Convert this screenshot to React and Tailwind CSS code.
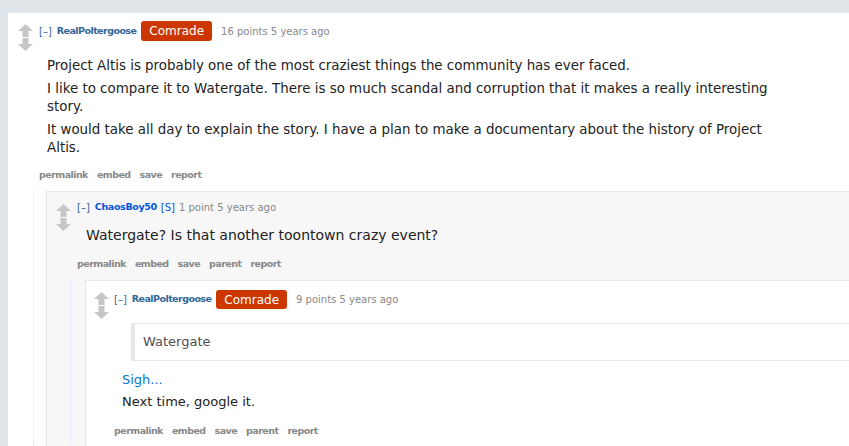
import React from "react";

function Arrows() {
  return (
    <div className="flex flex-col items-center w-[15px] shrink-0 gap-[1px]">
      <svg width="15" height="13" viewBox="0 0 15 13">
        <polygon points="7.5,0 15,7 10.5,7 10.5,13 4.5,13 4.5,7 0,7" fill="#c6c6c6" />
      </svg>
      <svg width="15" height="13" viewBox="0 0 15 13">
        <polygon points="4.5,0 10.5,0 10.5,6 15,6 7.5,13 0,6 4.5,6" fill="#c6c6c6" />
      </svg>
    </div>
  );
}

function Badge({ h }) {
  return (
    <span
      className={
        "inline-flex items-center px-[8px] rounded-[3px] bg-[#cc3700] text-white text-[12px] leading-none ml-[5px] mr-[9px] " +
        (h === 19 ? "h-[19px]" : "h-[20px]")
      }
    >
      Comrade
    </span>
  );
}

function Actions({ items }) {
  return (
    <div className="flex gap-[9px] text-[9.5px] font-bold text-[#888] leading-[14px] tracking-[-0.55px]">
      {items.map((t) => (
        <span key={t}>{t}</span>
      ))}
    </div>
  );
}

export default function App() {
  return (
    <div
      className="w-[849px] h-[446px] overflow-hidden bg-[#dfe5e8] border-t-2 border-[#e4e6e7] pt-[11px] pl-[8px]"
      style={{ fontFamily: '"DejaVu Sans", Verdana, sans-serif' }}
    >
      <div className="bg-white h-full pt-[8px]">
        {/* Top-level comment */}
        <div className="flex pl-[10px]">
          <div className="pt-[3px]">
            <Arrows />
          </div>
          <div className="ml-[6px] flex-1 min-w-0">
            <div className="flex items-center h-[20px] text-[10px] text-[#888]">
              <span className="text-[#369]">[–]</span>
              <span className="ml-[5px] text-[9.5px] font-bold text-[#369] tracking-[-0.55px]">RealPoltergoose</span>
              <Badge />
              <span>16 points 5 years ago</span>
            </div>
            <div className="ml-[8px] mt-[16px] text-[13.4px] leading-[18px] text-[#222] w-[730px]">
              <p className="mb-[5px]">Project Altis is probably one of the most craziest things the community has ever faced.</p>
              <p className="mb-[5px]">I like to compare it to Watergate. There is so much scandal and corruption that it makes a really interesting story.</p>
              <p>It would take all day to explain the story. I have a plan to make a documentary about the history of Project Altis.</p>
            </div>
            <div className="mt-[11px]">
              <Actions items={["permalink", "embed", "save", "report"]} />
            </div>
          </div>
        </div>

        {/* child */}
        <div className="ml-[25px] mt-[9px] border-l border-dotted border-[#ddf] pl-[12px]">
          <div className="bg-[#f7f7f7] border border-[#e6e6e6] border-r-0 pt-[7px] w-[900px]">
            <div className="flex pl-[9px]">
              <div className="pt-[5px]">
                <Arrows />
              </div>
              <div className="ml-[6px] flex-1 min-w-0">
                <div className="flex items-center h-[16px] text-[10px] text-[#888]">
                  <span className="text-[#369]">[–]</span>
                  <span className="ml-[5px] text-[9.5px] font-bold text-[#0055df] tracking-[-0.35px]">ChaosBoy50</span>
                  <span className="ml-[4px] text-[#0055df]">[S]</span>
                  <span className="ml-[4px]">1 point 5 years ago</span>
                </div>
                <div className="ml-[9px] mt-[10px] text-[14px] leading-[20px] text-[#222]">
                  Watergate? Is that another toontown crazy event?
                </div>
                <div className="mt-[12px]">
                  <Actions items={["permalink", "embed", "save", "parent", "report"]} />
                </div>
              </div>
            </div>

            {/* grandchild */}
            <div className="ml-[23px] mt-[9px] border-l border-dotted border-[#ddf] pl-[14px]">
              <div className="bg-white border border-[#e6e6e6] border-r-0 pt-[9px] pb-[20px]">
                <div className="flex pl-[8px]">
                  <div className="pt-[2px]">
                    <Arrows />
                  </div>
                  <div className="ml-[5px] flex-1 min-w-0">
                    <div className="flex items-center h-[19px] text-[10px] text-[#888]">
                      <span className="text-[#369]">[–]</span>
                      <span className="ml-[5px] text-[9.5px] font-bold text-[#369] tracking-[-0.55px]">RealPoltergoose</span>
                      <Badge h={19} />
                      <span>9 points 5 years ago</span>
                    </div>
                    <div className="ml-[8px] mt-[14px] text-[13px] leading-[18px] text-[#222]">
                      <blockquote className="ml-[9px] border-l-4 border-[#e6e6e6] border-y border-y-[#e6e6e6] pl-[8px] py-[9px] text-[#4f4f4f]">
                        Watergate
                      </blockquote>
                      <p className="mt-[10px] text-[#0079d3]">Sigh...</p>
                      <p className="mt-[4px]">Next time, google it.</p>
                    </div>
                    <div className="mt-[13px]">
                      <Actions items={["permalink", "embed", "save", "parent", "report"]} />
                    </div>
                  </div>
                </div>
              </div>
            </div>
          </div>
        </div>
      </div>
    </div>
  );
}
